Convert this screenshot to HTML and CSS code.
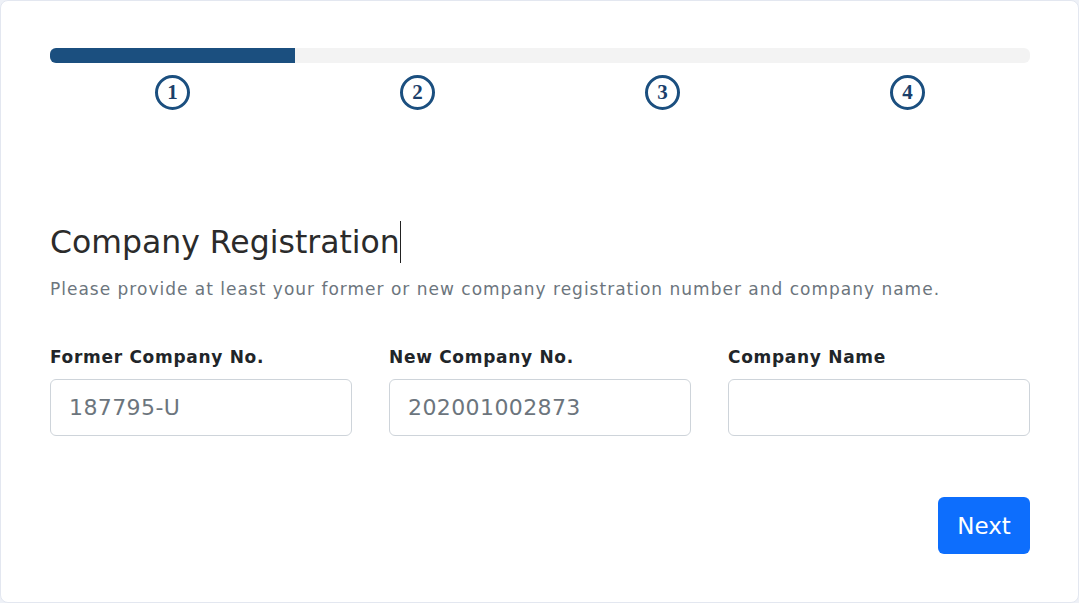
FILE: index.html
```html
<!DOCTYPE html>
<html lang="en">
<head>
    <meta charset="UTF-8">
    <meta name="viewport" content="width=device-width, initial-scale=1.0">
    <title>Company Registration</title>
    <link rel="stylesheet" href="styles.css">
</head>
<body>
    <div class="card">
        <div class="progress">
            <div class="progress-fill"></div>
        </div>
        <div class="steps">
            <div class="step"><span class="step-num">1</span></div>
            <div class="step"><span class="step-num">2</span></div>
            <div class="step"><span class="step-num">3</span></div>
            <div class="step"><span class="step-num">4</span></div>
        </div>

        <form id="registration" class="form">
            <h2 class="title">Company Registration<span class="caret"></span></h2>
            <p class="hint">Please provide at least your former or new company registration number and company name.</p>

            <div class="fields">
                <div class="field">
                    <label for="formerNo">Former Company No.</label>
                    <input type="text" id="formerNo" name="formerNo" placeholder="187795-U">
                </div>
                <div class="field">
                    <label for="newNo">New Company No.</label>
                    <input type="text" id="newNo" name="newNo" placeholder="202001002873">
                </div>
                <div class="field">
                    <label for="companyName">Company Name</label>
                    <input type="text" id="companyName" name="companyName">
                </div>
            </div>

            <div class="actions">
                <button type="submit">Next</button>
            </div>
        </form>
    </div>
</body>
</html>
```

FILE: styles.css
```css
body {
    font-family: "DejaVu Sans", "Open Sans", sans-serif;
    background-color: #eef1f7;
    margin: 0;
    padding: 0;
}
.card {
    background-color: #ffffff;
    border: 1px solid #e3e7f0;
    border-radius: 8px;
    height: 603px;
    box-sizing: border-box;
    padding: 47px 48px 0 49px;
}
.progress {
    height: 15px;
    background-color: #f3f3f3;
    border-radius: 6px;
    overflow: hidden;
}
.progress-fill {
    width: 25%;
    height: 100%;
    background-color: #1b4f7f;
}
.steps {
    display: grid;
    grid-template-columns: repeat(4, 1fr);
    margin-top: 12px;
}
.step {
    display: flex;
    justify-content: center;
}
.step-num {
    width: 29px;
    height: 29px;
    border: 3px solid #1b4f7f;
    border-radius: 50%;
    display: flex;
    justify-content: center;
    align-items: center;
    font-family: "Liberation Serif", serif;
    font-weight: bold;
    font-size: 21px;
    color: #1b3f6b;
}
.form {
    margin-top: 111px;
}
.title {
    font-weight: 400;
    font-size: 31.5px;
    color: #2b2b2b;
    margin: 0;
    line-height: 42px;
}
.caret {
    display: inline-block;
    width: 1px;
    height: 42px;
    background-color: #222;
    vertical-align: top;
}
.hint {
    font-size: 17px;
    letter-spacing: 1px;
    color: #6c757d;
    margin: 16px 0 0;
}
.fields {
    display: grid;
    grid-template-columns: repeat(3, 1fr);
    gap: 37px;
    margin-top: 48px;
}
label {
    display: block;
    font-weight: 600;
    font-size: 17px;
    letter-spacing: 0.7px;
    color: #212529;
    margin-bottom: 12px;
}
input {
    width: 100%;
    height: 57px;
    padding: 10px 18px;
    font-family: inherit;
    font-size: 22px;
    letter-spacing: 0.4px;
    border: 1px solid #ced4da;
    border-radius: 6px;
    box-sizing: border-box;
}
input::placeholder {
    color: #6c757d;
}
.actions {
    display: flex;
    justify-content: flex-end;
    margin-top: 61px;
}
button {
    width: 92px;
    height: 57px;
    background-color: #0d6efd;
    color: white;
    font-family: inherit;
    font-size: 23px;
    border: none;
    border-radius: 6px;
    cursor: pointer;
}
```
